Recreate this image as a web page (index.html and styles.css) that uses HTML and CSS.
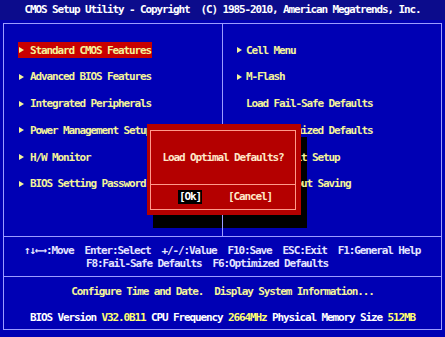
FILE: index.html
```html
<!DOCTYPE html>
<html lang="en">
<head>
    <meta charset="UTF-8">
    <meta name="viewport" content="width=device-width, initial-scale=1.0">
    <title>CMOS Setup Utility</title>
    <link rel="stylesheet" href="styles.css">
</head>
<body>
    <div class="title">CMOS Setup Utility - Copyright  (C) 1985-2010, American Megatrends, Inc.</div>

    <div class="frame">
        <div class="menu">
            <div class="col col-left">
                <div class="item selected"><span class="mark"><i class="arrow"></i></span>Standard CMOS Features</div>
                <div class="item"><span class="mark"><i class="arrow"></i></span>Advanced BIOS Features</div>
                <div class="item"><span class="mark"><i class="arrow"></i></span>Integrated Peripherals</div>
                <div class="item"><span class="mark"><i class="arrow"></i></span>Power Management Setup</div>
                <div class="item"><span class="mark"><i class="arrow"></i></span>H/W Monitor</div>
                <div class="item"><span class="mark"><i class="arrow"></i></span>BIOS Setting Password</div>
            </div>
            <div class="col col-right">
                <div class="item"><span class="mark"><i class="arrow"></i></span>Cell Menu</div>
                <div class="item"><span class="mark"><i class="arrow"></i></span>M-Flash</div>
                <div class="item"><span class="mark"></span>Load Fail-Safe Defaults</div>
                <div class="item"><span class="mark"></span>Load Optimized Defaults</div>
                <div class="item"><span class="mark"></span>Save &amp; Exit Setup</div>
                <div class="item"><span class="mark"></span>Exit Without Saving</div>
            </div>

            <!-- confirm popup -->
            <div class="dialog">
                <div class="dialog-box">
                    <div class="dialog-msg">Load Optimal Defaults?</div>
                    <div class="dialog-btns">
                        <span class="btn active">[Ok]</span>
                        <span class="btn">[Cancel]</span>
                    </div>
                </div>
            </div>
        </div>

        <div class="help">
            <div class="help-line">↑↓←→:Move  Enter:Select  +/-/:Value  F10:Save  ESC:Exit  F1:General Help</div>
            <div class="help-line help-sub">F8:Fail-Safe Defaults  F6:Optimized Defaults</div>
        </div>

        <div class="info">
            <div class="info-line hint">Configure Time and Date.  Display System Information...</div>
            <div class="info-line">BIOS Version <span class="val">V32.0B11</span> CPU Frequency <span class="val">2664MHz</span> Physical Memory Size <span class="val">512MB</span></div>
        </div>
    </div>
</body>
</html>
```

FILE: styles.css
```css
body {
    margin: 0;
    width: 445px;
    height: 337px;
    overflow: hidden;
    background-color: #0000b4;
    font-family: "DejaVu Sans Mono", "Liberation Mono", monospace;
    font-weight: bold;
    font-size: 11px;
    letter-spacing: -1.12px;
}

.title {
    height: 20px;
    line-height: 20px;
    background-color: #0c0c8c;
    color: #ffffff;
    text-align: center;
    white-space: pre;
}

.frame {
    margin: 3px 3px 0 3px;
    border: 1px solid #9c9cff;
}

/* main menu */
.menu {
    position: relative;
    z-index: 0;
    display: grid;
    grid-template-columns: 219px 1fr;
    height: 212px;
}

.col {
    display: flex;
    flex-direction: column;
    gap: 10.75px;
    padding-top: 18px;
    color: #f4f49a;
}

.col-left {
    padding-left: 14px;
    border-right: 1px solid #9c9cff;
}

.col-right {
    padding-left: 13px;
}

.item {
    display: flex;
    align-items: center;
    width: fit-content;
    height: 16px;
    padding: 0 1px;
    white-space: pre;
}

.item.selected {
    background-color: #c80000;
}

.mark {
    flex: none;
    width: 11px;
    display: flex;
    align-items: center;
}

.col-right .mark {
    width: 9px;
}

.arrow {
    width: 0;
    height: 0;
    border-left: 5px solid #f4f49a;
    border-top: 3.5px solid transparent;
    border-bottom: 3.5px solid transparent;
}

/* popup */
.dialog {
    position: absolute;
    left: 143px;
    top: 100px;
    width: 154px;
    height: 91px;
    box-sizing: border-box;
    padding: 6px 5px 5px 3px;
    background-color: #b40000;
    color: #ffe8c8;
}

.dialog::before {
    content: "";
    position: absolute;
    left: 6px;
    top: 13px;
    width: 100%;
    height: 100%;
    background-color: #000000;
    z-index: -1;
}

.dialog-box {
    height: 100%;
    box-sizing: border-box;
    border: 1px solid #ff9a8a;
    display: flex;
    flex-direction: column;
}

.dialog-msg {
    height: 53px;
    border-bottom: 1px solid #ff9a8a;
    display: flex;
    align-items: center;
    justify-content: center;
}

.dialog-btns {
    flex: 1;
    display: flex;
    align-items: center;
    justify-content: center;
    gap: 25px;
    padding-left: 5px;
}

.btn {
    padding: 0 1px;
    line-height: 14px;
}

.btn.active {
    background-color: #000000;
    color: #ffffff;
}

/* bottom panels */
.help {
    height: 40px;
    box-sizing: border-box;
    border-top: 1px solid #9c9cff;
    padding: 7px 0 0 20px;
    color: #e4e4ff;
}

.help-line {
    line-height: 13px;
    white-space: pre;
}

.help-sub {
    padding-left: 62px;
}

.info {
    height: 53px;
    box-sizing: border-box;
    border-top: 1px solid #9c9cff;
    padding-top: 8px;
    color: #ffffff;
    text-align: center;
}

.info-line {
    line-height: 13px;
    white-space: pre;
}

.info-line + .info-line {
    margin-top: 13px;
}

.hint {
    color: #f4f49a;
}

.val {
    color: #ffff70;
}
```
